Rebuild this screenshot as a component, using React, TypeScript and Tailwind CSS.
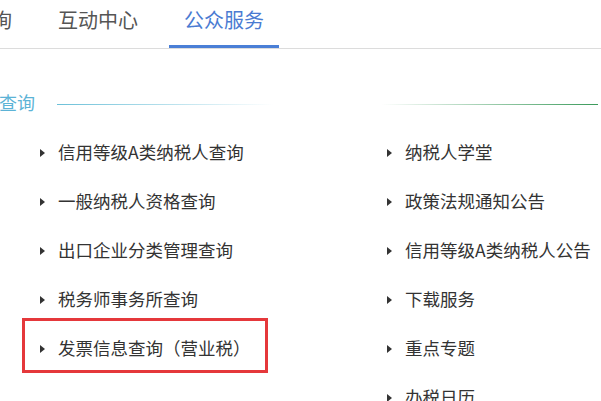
const font = { fontFamily: '"Noto Sans CJK SC", "Noto Sans", sans-serif' };

const left = [
  "信用等级A类纳税人查询",
  "一般纳税人资格查询",
  "出口企业分类管理查询",
  "税务师事务所查询",
  "发票信息查询（营业税）",
];

const right = [
  "纳税人学堂",
  "政策法规通知公告",
  "信用等级A类纳税人公告",
  "下载服务",
  "重点专题",
  "办税日历",
];

function Item({ label }: { label: string }) {
  return (
    <div className="flex h-[49px] items-center">
      <span className="h-0 w-0 border-y-[4px] border-l-[5px] border-y-transparent border-l-[#333]" />
      <span className="ml-[13px] whitespace-nowrap text-[17.5px] text-[#333]">{label}</span>
    </div>
  );
}

export default function App() {
  return (
    <div className="relative h-[401px] w-[601px] overflow-hidden bg-white" style={font}>
      <div className="flex h-[49px] border-b border-[#dcdcdc]">
        <div className="-ml-[23px] flex gap-4">
          {[
            { label: "询", active: false },
            { label: "互动中心", active: false },
            { label: "公众服务", active: true },
          ].map(({ label, active }) => (
            <div key={label} className="relative h-[48px] px-[15px]">
              <span className={`whitespace-nowrap text-[20px] leading-[40px] ${active ? "text-[#4a7bd2]" : "text-[#555]"}`}>
                {label}
              </span>
              {active && <span className="absolute bottom-0 left-0 right-0 h-[3px] bg-[#4a7fd6]" />}
            </div>
          ))}
        </div>
      </div>

      <div className="mt-[41px] flex items-start">
        <span className="-ml-[1px] text-[18px] leading-[24px] text-[#5cb3d6]">查询</span>
        <span className="ml-[22px] mr-[3px] mt-[14px] h-px flex-1 bg-[linear-gradient(to_right,#6cc0d8_0%,rgba(255,255,255,0)_40%,rgba(255,255,255,0)_60%,#3a9a5a_100%)]" />
      </div>

      <div className="mt-[14px] grid grid-cols-[387px_1fr]">
        <div className="flex flex-col pl-[40px]">
          {left.map((l) => (
            <Item key={l} label={l} />
          ))}
        </div>
        <div className="flex flex-col">
          {right.map((l) => (
            <Item key={l} label={l} />
          ))}
        </div>
      </div>

      <div className="absolute left-[22px] top-[318px] h-[55px] w-[246px] border-[3px] border-[#e5383b]" />
    </div>
  );
}
